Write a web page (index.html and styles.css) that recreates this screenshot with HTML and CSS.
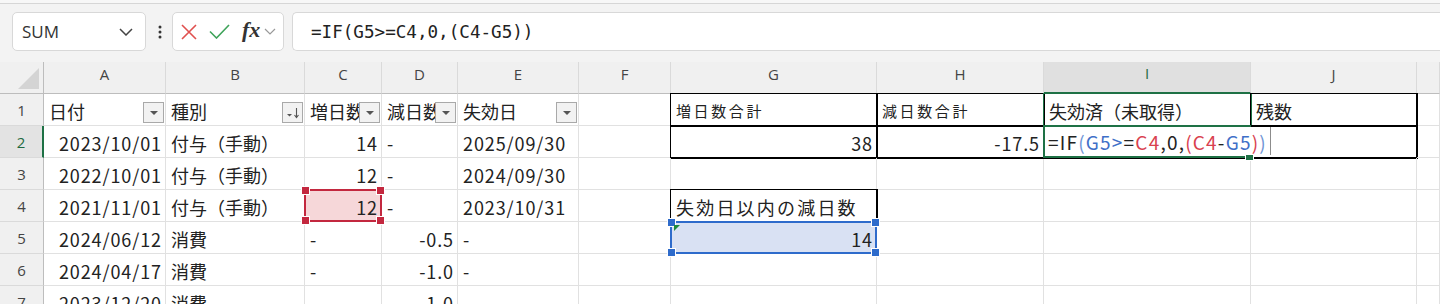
FILE: index.html
```html
<!DOCTYPE html>
<html lang="ja">
<head>
    <meta charset="UTF-8">
    <meta name="viewport" content="width=device-width, initial-scale=1.0">
    <title>有給管理</title>
    <link rel="stylesheet" href="styles.css">
</head>
<body>
    <div class="topstrip"></div>
    <div class="fbar">
        <div class="namebox">
            <span>SUM</span>
            <svg class="chev" width="14" height="8" viewBox="0 0 14 8"><path d="M1 1 L7 7 L13 1" fill="none" stroke="#444" stroke-width="1.5"/></svg>
        </div>
        <svg class="dots" width="4" height="14" viewBox="0 0 4 14"><circle cx="2" cy="2" r="1.5" fill="#333"/><circle cx="2" cy="7" r="1.5" fill="#333"/><circle cx="2" cy="12" r="1.5" fill="#333"/></svg>
        <div class="fxbox">
            <svg width="16" height="16" viewBox="0 0 16 16"><path d="M1 1 L15 15 M15 1 L1 15" stroke="#e0504f" stroke-width="1.6" fill="none"/></svg>
            <svg width="21" height="15" viewBox="0 0 21 15"><path d="M1 7.5 L7.5 14 L20 1" stroke="#3fa35a" stroke-width="1.6" fill="none"/></svg>
            <span class="fx">fx</span>
            <svg width="12" height="7" viewBox="0 0 12 7"><path d="M1 1 L6 6 L11 1" fill="none" stroke="#999" stroke-width="1.2"/></svg>
        </div>
        <div class="finput">=IF(G5&gt;=C4,0,(C4-G5))</div>
    </div>

    <div class="sheet">
        <!-- header row -->
        <div class="hd corner"><div class="tri"></div></div>
        <div class="hd col">A</div>
        <div class="hd col">B</div>
        <div class="hd col">C</div>
        <div class="hd col">D</div>
        <div class="hd col">E</div>
        <div class="hd col">F</div>
        <div class="hd col">G</div>
        <div class="hd col">H</div>
        <div class="hd col active-col">I</div>
        <div class="hd col">J</div>
        <div class="hd col"></div>

        <!-- row 1 -->
        <div class="hd row">1</div>
        <div class="c">日付<span class="filt"><svg width="10" height="6" viewBox="0 0 10 6"><path d="M1 1 H9 L5 5 Z" fill="#555"/></svg></span></div>
        <div class="c">種別<span class="filt"><svg width="14" height="12" viewBox="0 0 14 12"><path d="M1 7 H6 L3.5 9.5 Z" fill="#555"/><path d="M10.5 1 V10 M8.5 8 L10.5 10.5 L12.5 8" stroke="#555" stroke-width="1.1" fill="none"/></svg></span></div>
        <div class="c">増日数<span class="filt"><svg width="10" height="6" viewBox="0 0 10 6"><path d="M1 1 H9 L5 5 Z" fill="#555"/></svg></span></div>
        <div class="c">減日数<span class="filt"><svg width="10" height="6" viewBox="0 0 10 6"><path d="M1 1 H9 L5 5 Z" fill="#555"/></svg></span></div>
        <div class="c">失効日<span class="filt"><svg width="10" height="6" viewBox="0 0 10 6"><path d="M1 1 H9 L5 5 Z" fill="#555"/></svg></span></div>
        <div class="c"></div>
        <div class="c boxed small">増日数合計</div>
        <div class="c boxed small">減日数合計</div>
        <div class="c boxed green-top">失効済（未取得）</div>
        <div class="c boxed">残数</div>
        <div class="c"></div>

        <!-- row 2 -->
        <div class="hd row active-row">2</div>
        <div class="c num">2023/10/01</div>
        <div class="c">付与（手動）</div>
        <div class="c num">14</div>
        <div class="c">-</div>
        <div class="c dt">2025/09/30</div>
        <div class="c"></div>
        <div class="c boxed num">38</div>
        <div class="c boxed num">-17.5</div>
        <div class="c boxed editing">
            <div class="ring green"><i class="h br"></i></div>
            <div class="edit">=IF<span class="pb">(</span><span class="rb">G5&gt;</span>=<span class="rr">C4</span>,0,<span class="pr">(C4</span>-<span class="rb">G5</span><span class="pr">)</span><span class="pb">)</span></div>
        </div>
        <div class="c boxed"></div>
        <div class="c"></div>

        <!-- row 3 -->
        <div class="hd row">3</div>
        <div class="c num">2022/10/01</div>
        <div class="c">付与（手動）</div>
        <div class="c num">12</div>
        <div class="c">-</div>
        <div class="c dt">2024/09/30</div>
        <div class="c"></div>
        <div class="c"></div>
        <div class="c"></div>
        <div class="c"></div>
        <div class="c"></div>
        <div class="c"></div>

        <!-- row 4 -->
        <div class="hd row">4</div>
        <div class="c num">2021/11/01</div>
        <div class="c">付与（手動）</div>
        <div class="c num ref-red">12<div class="ring red"><i class="h tl"></i><i class="h tr"></i><i class="h bl"></i><i class="h br"></i></div></div>
        <div class="c">-</div>
        <div class="c dt">2023/10/31</div>
        <div class="c"></div>
        <div class="c boxed wide">失効日以内の減日数</div>
        <div class="c"></div>
        <div class="c"></div>
        <div class="c"></div>
        <div class="c"></div>

        <!-- row 5 -->
        <div class="hd row">5</div>
        <div class="c num">2024/06/12</div>
        <div class="c">消費</div>
        <div class="c">-</div>
        <div class="c num">-0.5</div>
        <div class="c">-</div>
        <div class="c"></div>
        <div class="c num ref-blue">14<div class="ring blue"><i class="h tl"></i><i class="h tr"></i><i class="h bl"></i><i class="h br"></i></div><i class="errmark"></i></div>
        <div class="c"></div>
        <div class="c"></div>
        <div class="c"></div>
        <div class="c"></div>

        <!-- row 6 -->
        <div class="hd row">6</div>
        <div class="c num">2024/04/17</div>
        <div class="c">消費</div>
        <div class="c">-</div>
        <div class="c num">-1.0</div>
        <div class="c">-</div>
        <div class="c"></div>
        <div class="c"></div>
        <div class="c"></div>
        <div class="c"></div>
        <div class="c"></div>
        <div class="c"></div>

        <!-- row 7 -->
        <div class="hd row">7</div>
        <div class="c num">2023/12/20</div>
        <div class="c">消費</div>
        <div class="c">-</div>
        <div class="c num">-1.0</div>
        <div class="c">-</div>
        <div class="c"></div>
        <div class="c"></div>
        <div class="c"></div>
        <div class="c"></div>
        <div class="c"></div>
        <div class="c"></div>
    </div>
</body>
</html>
```

FILE: styles.css
```css
body {
    margin: 0;
    background-color: #fff;
    font-family: "Noto Sans CJK JP", "Noto Sans", sans-serif;
    color: #222;
    overflow: hidden;
    height: 304px;
}
.topstrip {
    height: 3px;
    background-color: #f7f7f7;
    border-bottom: 1px solid #d6d6d6;
}
.fbar {
    display: flex;
    align-items: center;
    height: 58px;
    padding-left: 12px;
    background-color: #f3f3f3;
    box-sizing: border-box;
    padding-bottom: 3px;
}
.namebox {
    width: 134px;
    height: 39px;
    box-sizing: border-box;
    background-color: #fff;
    border: 1px solid #d8d8d8;
    border-radius: 5px;
    display: flex;
    align-items: center;
    justify-content: space-between;
    padding: 0 12px 0 9px;
    font-family: "Open Sans", "Noto Sans", sans-serif;
    font-size: 17px;
    color: #333;
}
.dots {
    margin: 0 10px 0 12px;
}
.fxbox {
    width: 112px;
    height: 39px;
    box-sizing: border-box;
    background-color: #fff;
    border: 1px solid #d8d8d8;
    border-radius: 5px;
    display: flex;
    align-items: center;
    gap: 12px;
    padding-left: 8px;
}
.fxbox svg:last-child {
    margin-left: -8px;
}
.fx {
    font-family: "Liberation Serif", "DejaVu Serif", serif;
    font-style: italic;
    font-weight: bold;
    font-size: 22px;
    color: #333;
    margin-top: -3px;
}
.finput {
    flex: 1;
    margin-left: 8px;
    height: 39px;
    box-sizing: border-box;
    background-color: #fff;
    border: 1px solid #d8d8d8;
    border-right: none;
    border-radius: 5px 0 0 5px;
    display: flex;
    align-items: center;
    padding-left: 18px;
    font-family: "DejaVu Sans Mono", "Liberation Mono", monospace;
    font-size: 17.6px;
    color: #222;
}

.sheet {
    display: grid;
    grid-template-columns: 44px 122px 139px 77px 76px 121px 92px 206px 167px 207px 166px 1fr;
    grid-auto-rows: 32px;
}
.hd {
    background-color: #f0f0f0;
    color: #444;
    font-family: "Open Sans", "Noto Sans", sans-serif;
    font-size: 15px;
    display: flex;
    align-items: center;
    justify-content: center;
    box-sizing: border-box;
}
.hd.col {
    border-right: 1px solid #dadada;
    border-bottom: 1px solid #bdbdbd;
    padding-bottom: 8px;
}
.hd.corner {
    border-right: 1px solid #bdbdbd;
    border-bottom: 1px solid #bdbdbd;
    position: relative;
}
.tri {
    position: absolute;
    right: 4px;
    bottom: 4px;
    width: 0;
    height: 0;
    border-left: 21px solid transparent;
    border-bottom: 21px solid #d4d4d4;
}
.hd.row {
    border-right: 1px solid #bdbdbd;
    border-bottom: 1px solid #dadada;
}
.active-col {
    background-color: #e0e0e0;
    color: #1e6b41;
    border-bottom: 2px solid #1e7145 !important;
}
.active-row {
    background-color: #e3e3e3;
    color: #1e6b41;
    border-right: 2px solid #1e7145 !important;
}

.c {
    position: relative;
    box-sizing: border-box;
    border-right: 1px solid #e1e1e1;
    border-bottom: 1px solid #e1e1e1;
    display: flex;
    align-items: center;
    padding: 2px 4px 0 5px;
    font-size: 18px;
    white-space: nowrap;
    overflow: hidden;
}
.num, .dt {
    letter-spacing: 0.9px;
}
.num {
    justify-content: flex-end;
    padding-right: 3px;
}
.boxed {
    border-right-color: #000;
    border-bottom-color: #000;
    box-shadow: 0 0 0 1px #000;
}
.small {
    font-size: 15px;
    letter-spacing: 2.6px;
}
.wide {
    letter-spacing: 2.2px;
}
.green-top {
    box-shadow: 0 0 0 1px #1e7145;
    border-right-color: #1e7145;
}

.filt {
    position: absolute;
    right: 1px;
    bottom: 2px;
    width: 21px;
    height: 21px;
    box-sizing: border-box;
    border: 1px solid #a9a9a9;
    background-color: #f2f2f2;
    display: flex;
    align-items: center;
    justify-content: center;
}

.ring {
    position: absolute;
    top: -1px;
    left: -1px;
    right: -1px;
    bottom: -1px;
    border: 2px solid;
    z-index: 2;
}
.ring.red { border-color: #c3283f; }
.ring.blue { border-color: #2e6bcb; }
.ring.green { border-color: #1e7145; }
.ref-red {
    background-color: #f6d7d9;
    overflow: visible;
    z-index: 3;
}
.ref-blue {
    background-color: #d9e1f3;
    overflow: visible;
    z-index: 3;
}
.h {
    position: absolute;
    width: 7px;
    height: 7px;
    border: 1px solid #fff;
}
.red .h { background-color: #c3283f; }
.blue .h { background-color: #2e6bcb; }
.green .h { background-color: #1e7145; }
.h.tl { top: -5px; left: -5px; }
.h.tr { top: -5px; right: -5px; }
.h.bl { bottom: -5px; left: -5px; }
.h.br { bottom: -5px; right: -5px; }
.errmark {
    position: absolute;
    left: 3px;
    top: 3px;
    width: 0;
    height: 0;
    border-top: 6px solid #1e8a3c;
    border-right: 6px solid transparent;
    z-index: 4;
}

.editing {
    overflow: visible;
    z-index: 3;
}
.edit {
    position: absolute;
    left: 1px;
    top: 1px;
    bottom: 2px;
    width: 226px;
    padding-left: 3px;
    box-sizing: border-box;
    background-color: #fff;
    border-right: 1px solid #8c8c8c;
    display: flex;
    align-items: center;
    font-size: 19px;
    letter-spacing: 1.2px;
    color: #222;
    z-index: 3;
}
.pb { color: #6f95d6; }
.rb { color: #3f6fc8; }
.rr { color: #d9414f; }
.pr { color: #d9414f; }
```
